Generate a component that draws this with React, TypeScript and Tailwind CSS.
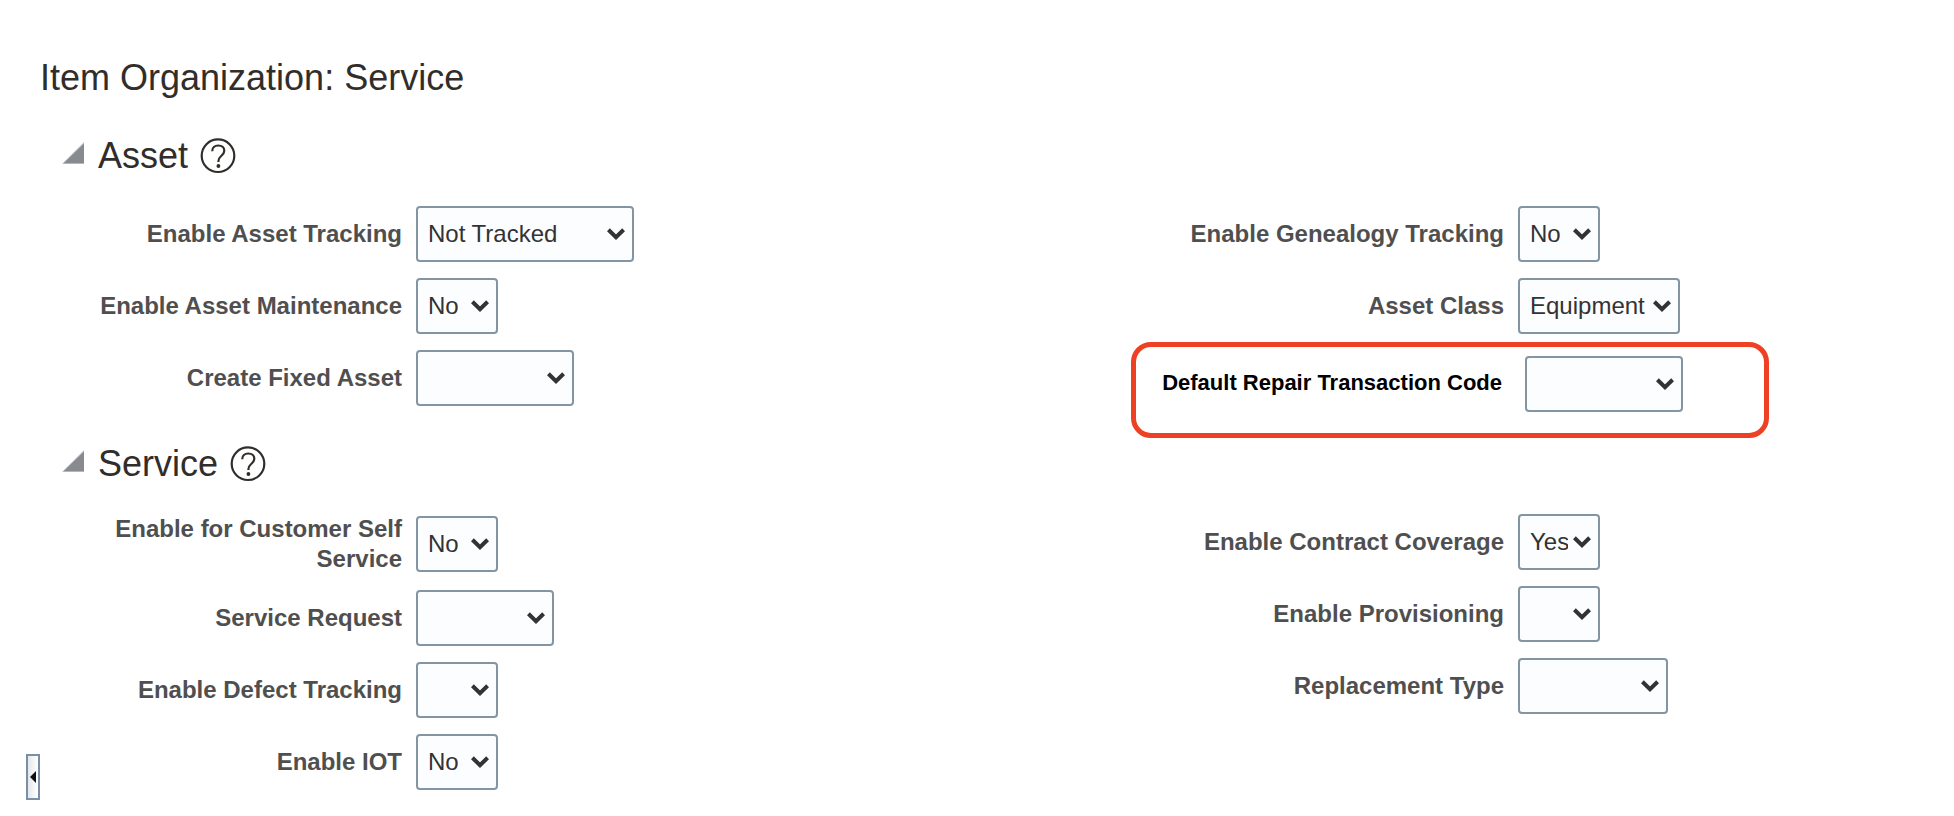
import { useId } from "react";

type FieldProps = {
  label: string;
  options: string[];
  width: string;
  labelWidth?: string;
};

function SelectBox({ id, options, width }: { id: string; options: string[]; width: string }) {
  return (
    <div className={`relative shrink-0 ${width}`}>
      <select
        id={id}
        className="block h-14 w-full appearance-none rounded-[4px] border-2 border-[#8395a2] bg-[#fcfdfe] pr-[30px] pl-[10px] text-2xl text-[#333333]"
      >
        {options.map((option) => (
          <option key={option} value={option}>
            {option}
          </option>
        ))}
      </select>
      <svg
        className="pointer-events-none absolute top-[22px] right-[9px] h-3 w-[18px]"
        viewBox="0 0 18 12"
        fill="none"
        stroke="#333333"
        strokeWidth="4"
        aria-hidden="true"
      >
        <path d="M1.4 1.8 9 9.2l7.6-7.4" />
      </svg>
    </div>
  );
}

function Field({ label, options, width, labelWidth = "w-[304px]" }: FieldProps) {
  const id = useId();
  return (
    <div className="flex items-center gap-[14px]">
      <label
        htmlFor={id}
        className={`shrink-0 text-right text-2xl leading-[30px] font-bold text-[#4f4f4f] ${labelWidth}`}
      >
        {label}
      </label>
      <SelectBox id={id} options={options} width={width} />
    </div>
  );
}

function SectionHeader({ title }: { title: string }) {
  return (
    <div className="flex h-9 items-center pl-[22px]">
      <button type="button" aria-label={`Collapse ${title}`} className="mr-[14px]">
        <svg className="mb-[6px] block h-[22px] w-[22px]" viewBox="0 0 22 22" aria-hidden="true">
          <path d="M22 0v22H0z" fill="#c3c5c8" />
          <path d="M22 1.500V21.300H1.500z" fill="#878a8f" />
        </svg>
      </button>
      <h2 className="text-4xl leading-9 text-[#312d2a]">{title}</h2>
      <button type="button" aria-label={`Help for ${title}`} className="ml-3">
        <svg className="block h-9 w-9" viewBox="0 0 36 36" fill="none" stroke="#312d2a" aria-hidden="true">
          <circle cx="18" cy="17.700" r="16.300" strokeWidth="2.200" />
          <path
            d="M12.200 13.200c0-3.400 2.500-5.700 6.100-5.700 3.500 0 6 2.100 6 5.300 0 2.500-1.300 3.700-3.100 5.200-1.900 1.600-2.800 2.700-2.800 5.200v.8"
            strokeWidth="2.200"
          />
          <circle cx="18.400" cy="28" r="1.900" fill="#312d2a" stroke="none" />
        </svg>
      </button>
    </div>
  );
}

function HighlightedField() {
  const id = useId();
  return (
    <div className="mt-2 flex h-24 w-[638px] rounded-[20px] border-[5px] border-[#ee4023] pt-[9px]">
      <label
        htmlFor={id}
        className="w-[366px] shrink-0 pt-3 text-right text-[22px] leading-[30px] font-bold text-black"
      >
        Default Repair Transaction Code
      </label>
      <div className="pl-[23px]">
        <SelectBox id={id} options={[""]} width="w-[158px]" />
      </div>
    </div>
  );
}

const columns = "mt-8 grid grid-cols-[1033fr_823fr] pl-[58px]";

export default function App() {
  return (
    <div className="min-h-screen bg-white pt-14 font-['Liberation_Sans',Arial,sans-serif]">
      <h1 className="pl-10 text-4xl leading-[44px] text-[#312d2a]">Item Organization: Service</h1>

      <div className="mt-[38px] flex items-end">
        <button
          type="button"
          aria-label="Collapse panel"
          className="ml-[26px] flex h-[46px] w-[14px] shrink-0 items-center justify-center border-2 border-[#7a8fa5] bg-linear-to-r from-[#e4e8ec] to-white"
        >
          <svg className="h-3 w-[6px]" viewBox="0 0 6 12" aria-hidden="true">
            <path d="M6 0v12L0 6z" fill="#111111" />
          </svg>
        </button>

        <main className="min-w-0 flex-1 pb-[10px]">
          <section>
            <SectionHeader title="Asset" />
            <div className={columns}>
              <div className="flex flex-col gap-4">
                <Field label="Enable Asset Tracking" options={["Not Tracked"]} width="w-[218px]" />
                <Field label="Enable Asset Maintenance" options={["No", "Yes"]} width="w-[82px]" />
                <Field label="Create Fixed Asset" options={[""]} width="w-[158px]" />
              </div>
              <div>
                <div className="flex flex-col gap-4">
                  <Field
                    label="Enable Genealogy Tracking"
                    options={["No", "Yes"]}
                    width="w-[82px]"
                    labelWidth="w-[373px]"
                  />
                  <Field
                    label="Asset Class"
                    options={["Equipment"]}
                    width="w-[162px]"
                    labelWidth="w-[373px]"
                  />
                </div>
                <HighlightedField />
              </div>
            </div>
          </section>

          <section className="mt-2">
            <SectionHeader title="Service" />
            <div className={columns}>
              <div className="flex flex-col gap-4">
                <Field label="Enable for Customer Self Service" options={["No", "Yes"]} width="w-[82px]" />
                <Field label="Service Request" options={[""]} width="w-[138px]" />
                <Field label="Enable Defect Tracking" options={["", "No", "Yes"]} width="w-[82px]" />
                <Field label="Enable IOT" options={["No", "Yes"]} width="w-[82px]" />
              </div>
              <div className="flex flex-col gap-4">
                <Field
                  label="Enable Contract Coverage"
                  options={["Yes", "No"]}
                  width="w-[82px]"
                  labelWidth="w-[373px]"
                />
                <Field
                  label="Enable Provisioning"
                  options={["", "No", "Yes"]}
                  width="w-[82px]"
                  labelWidth="w-[373px]"
                />
                <Field
                  label="Replacement Type"
                  options={[""]}
                  width="w-[150px]"
                  labelWidth="w-[373px]"
                />
              </div>
            </div>
          </section>
        </main>
      </div>
    </div>
  );
}
